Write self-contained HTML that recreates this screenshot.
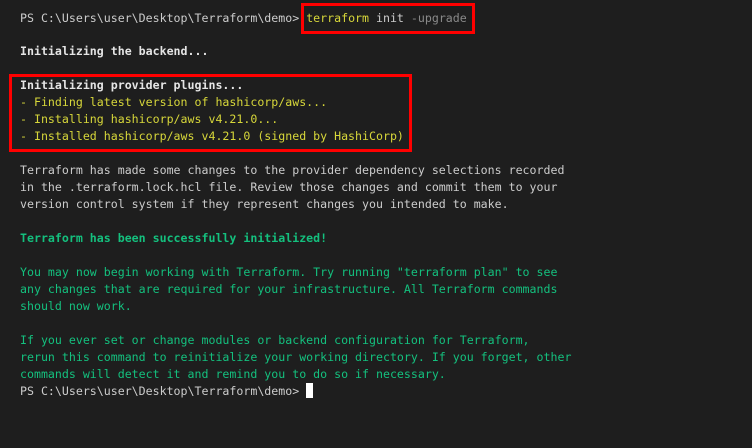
<!DOCTYPE html>
<html><head><style>
html,body{margin:0;padding:0;width:752px;height:448px;background:#1e1e1e;overflow:hidden}
.l{position:absolute;left:20px;font-family:"DejaVu Sans Mono","Liberation Mono",monospace;font-size:11.6px;line-height:17px;white-space:pre;color:#cccccc}
.b{font-weight:bold;color:#e5e5e5}
.y{color:#d7d73a}
.g{color:#14c07e}
.gr{color:#8a8a8a}
.box{position:absolute;border:3px solid #f00;box-sizing:border-box}
.cur{display:inline-block;width:7px;height:15px;background:#fff;vertical-align:-3px}
</style></head><body>
<div class="l" style="top:10px">PS C:\Users\user\Desktop\Terraform\demo&gt; <span class="y">terraform</span> init <span class="gr">-upgrade</span></div>
<div class="l b" style="top:43px">Initializing the backend...</div>
<div class="l b" style="top:77px">Initializing provider plugins...</div>
<div class="l y" style="top:94px">- Finding latest version of hashicorp/aws...</div>
<div class="l y" style="top:111px">- Installing hashicorp/aws v4.21.0...</div>
<div class="l y" style="top:128px">- Installed hashicorp/aws v4.21.0 (signed by HashiCorp)</div>
<div class="l" style="top:162px">Terraform has made some changes to the provider dependency selections recorded</div>
<div class="l" style="top:179px">in the .terraform.lock.hcl file. Review those changes and commit them to your</div>
<div class="l" style="top:196px">version control system if they represent changes you intended to make.</div>
<div class="l g b" style="top:230px;color:#14c07e">Terraform has been successfully initialized!</div>
<div class="l g" style="top:264px">You may now begin working with Terraform. Try running "terraform plan" to see</div>
<div class="l g" style="top:281px">any changes that are required for your infrastructure. All Terraform commands</div>
<div class="l g" style="top:298px">should now work.</div>
<div class="l g" style="top:332px">If you ever set or change modules or backend configuration for Terraform,</div>
<div class="l g" style="top:349px">rerun this command to reinitialize your working directory. If you forget, other</div>
<div class="l g" style="top:366px">commands will detect it and remind you to do so if necessary.</div>
<div class="l" style="top:383px">PS C:\Users\user\Desktop\Terraform\demo&gt; <span class="cur"></span></div>
<div class="box" style="left:301px;top:3px;width:174px;height:31px"></div>
<div class="box" style="left:9px;top:74px;width:403px;height:78px"></div>
</body></html>
